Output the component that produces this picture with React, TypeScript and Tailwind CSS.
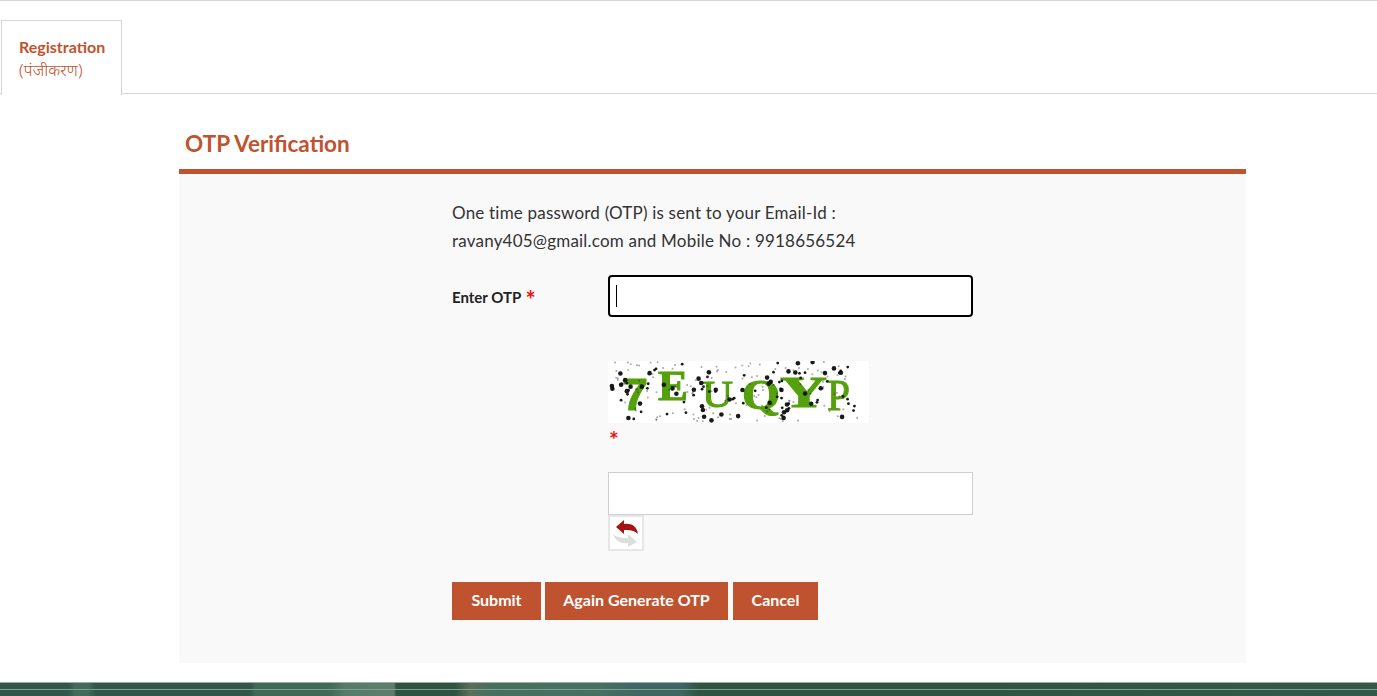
const dots: [number, number, number][] = (() => {
  let s = 7341;
  const r = () => {
    s = (s * 16807) % 2147483647;
    return s / 2147483647;
  };
  const out: [number, number, number][] = [];
  for (let i = 0; i < 230; i++) {
    const k = r();
    out.push([r() * 250 + 2, r() * 60 + 1, k > 0.8 ? 2.3 : k > 0.55 ? 1.4 : 1]);
  }
  return out;
})();

function Captcha() {
  const g = { fill: "#55a00c", stroke: "#55a00c", lengthAdjust: "spacingAndGlyphs" as const };
  return (
    <div className="w-[261px] h-[62px] bg-white">
      <svg width="261" height="62" viewBox="0 0 261 62" className="block">
        <defs>
          <filter id="soft" x="-5%" y="-5%" width="110%" height="110%">
            <feGaussianBlur stdDeviation="0.45" />
          </filter>
        </defs>
        <g filter="url(#soft)">
          <g fontFamily="'Liberation Serif', serif" fontWeight="700">
            <text x="14" y="49" fontSize="44" fontFamily="'Liberation Sans', sans-serif" textLength={26} {...g}>7</text>
            <text x="50" y="39" fontSize="42" textLength={30} {...g}>E</text>
            <text x="94" y="46" fontSize="38" textLength={31} fontWeight="400" {...g}>U</text>
            <text x="134" y="48" fontSize="42" textLength={38} {...g}>Q</text>
            <text x="172" y="46" fontSize="44" textLength={47} {...g}>Y</text>
            <text x="219" y="49" fontSize="45" textLength={23} fontWeight="400" {...g}>P</text>
          </g>
          <g fill="#111111">
            {dots.map(([x, y, d], i) => (
              <circle key={i} cx={x} cy={y} r={d} opacity={d === 1 ? 0.35 : 0.95} />
            ))}
          </g>
        </g>
      </svg>
    </div>
  );
}

function RefreshIcon() {
  return (
    <div className="w-[36px] h-[36px] border-2 border-[#e6e6e6] bg-white">
      <svg width="32" height="32" viewBox="2 2 32 32" className="block">
        <path d="M5 19C9 23 15 23 20 23V19L29 27 20 32V28C13 29 7 26 5 19Z" fill="#dcdedc" />
        <path d="M8 12 16 5V9C23 8 29 11 30 19 26 15 21 15 16 15V19Z" fill="#a31414" />
      </svg>
    </div>
  );
}

export default function App() {
  return (
    <div className="relative h-[696px] overflow-hidden bg-white font-['Lato','Liberation_Sans',sans-serif] text-[#333333]">
      <div className="border-t border-[#d4d4d4] pt-[19px]">
        <div className="flex h-[74px] border-b border-[#d8d8d8] pl-[1px]">
          <div className="relative h-[75px] w-[121px] border border-b-0 border-[#d4d4d4] bg-white pl-[17px] pt-[15px] text-[#c0532f]">
            <div className="text-[16px] leading-[21px] font-bold">Registration</div>
            <div className="text-[16.500px] leading-[26px] font-['Noto_Sans','Lato',sans-serif] font-light">(पंजीकरण)</div>
          </div>
        </div>
      </div>

      <div className="ml-[179px] w-[1067px] pt-[35px]">
        <h1 className="pl-[6px] text-[22.500px] leading-[30px] font-bold text-[#c0532f]">OTP Verification</h1>
        <div className="mt-[10px] h-[494px] border-t-[5px] border-[#c0532f] bg-[#f9f9f9] pl-[273px] pt-[25px]">
          <p className="text-[17px] leading-[28px] text-[#333333] tracking-[0.2px]">
            One time password (OTP) is sent to your Email-Id :
            <br />
            ravany405@gmail.com and Mobile No : 9918656524
          </p>
          <div className="mt-[20px] flex items-center">
            <div className="w-[156px] pt-[3px] text-[15px] font-bold text-[#222222]">
              Enter OTP <span className="ml-[1px] align-[-6px] text-[24px] leading-[14px] text-[#ee1111]">*</span>
            </div>
            <div className="flex h-[42px] w-[365px] items-center rounded-[4px] border-2 border-black bg-white pl-[6px]">
              <div className="h-[22px] w-[1px] bg-black" />
            </div>
          </div>
          <div className="ml-[156px] mt-[44px]">
            <Captcha />
            <div className="mt-[4px] h-[45px] pl-[1px] text-[23px] leading-[24px] font-bold text-[#ee1111]">*</div>
            <div className="h-[43px] w-[365px] border border-[#cfcfcf] bg-white" />
            <RefreshIcon />
          </div>
          <div className="mt-[31px] flex text-[16px] font-bold text-white">
            <button className="h-[38px] w-[89px] bg-[#c0532f] pb-[2px]">Submit</button>
            <button className="ml-[4px] h-[38px] w-[183px] bg-[#c0532f] pb-[2px]">Again Generate OTP</button>
            <button className="ml-[5px] h-[38px] w-[85px] bg-[#c0532f] pb-[2px]">Cancel</button>
          </div>
        </div>
      </div>

      <div className="absolute bottom-0 left-0 right-0 h-[14px] border-t border-[#a3a8a3] bg-[linear-gradient(90deg,#30574a_0px,#30574a_68px,#426b5b_75px,#426b5b_88px,#30574a_96px,#30574a_250px,#3f6a58_256px,#3f6a58_330px,#557b6b_345px,#5f7d6c_394px,#2f5342_396px,#2f5342_455px,#59705a_470px,#476f5f_490px,#457062_600px,#3e6664_640px,#3e6664_680px,#2e5443_700px,#2e5443_1000px,#33594a_1377px)]">
        <div className="mt-[6px] h-[1px] bg-[#7f9f90]" />
      </div>
    </div>
  );
}
